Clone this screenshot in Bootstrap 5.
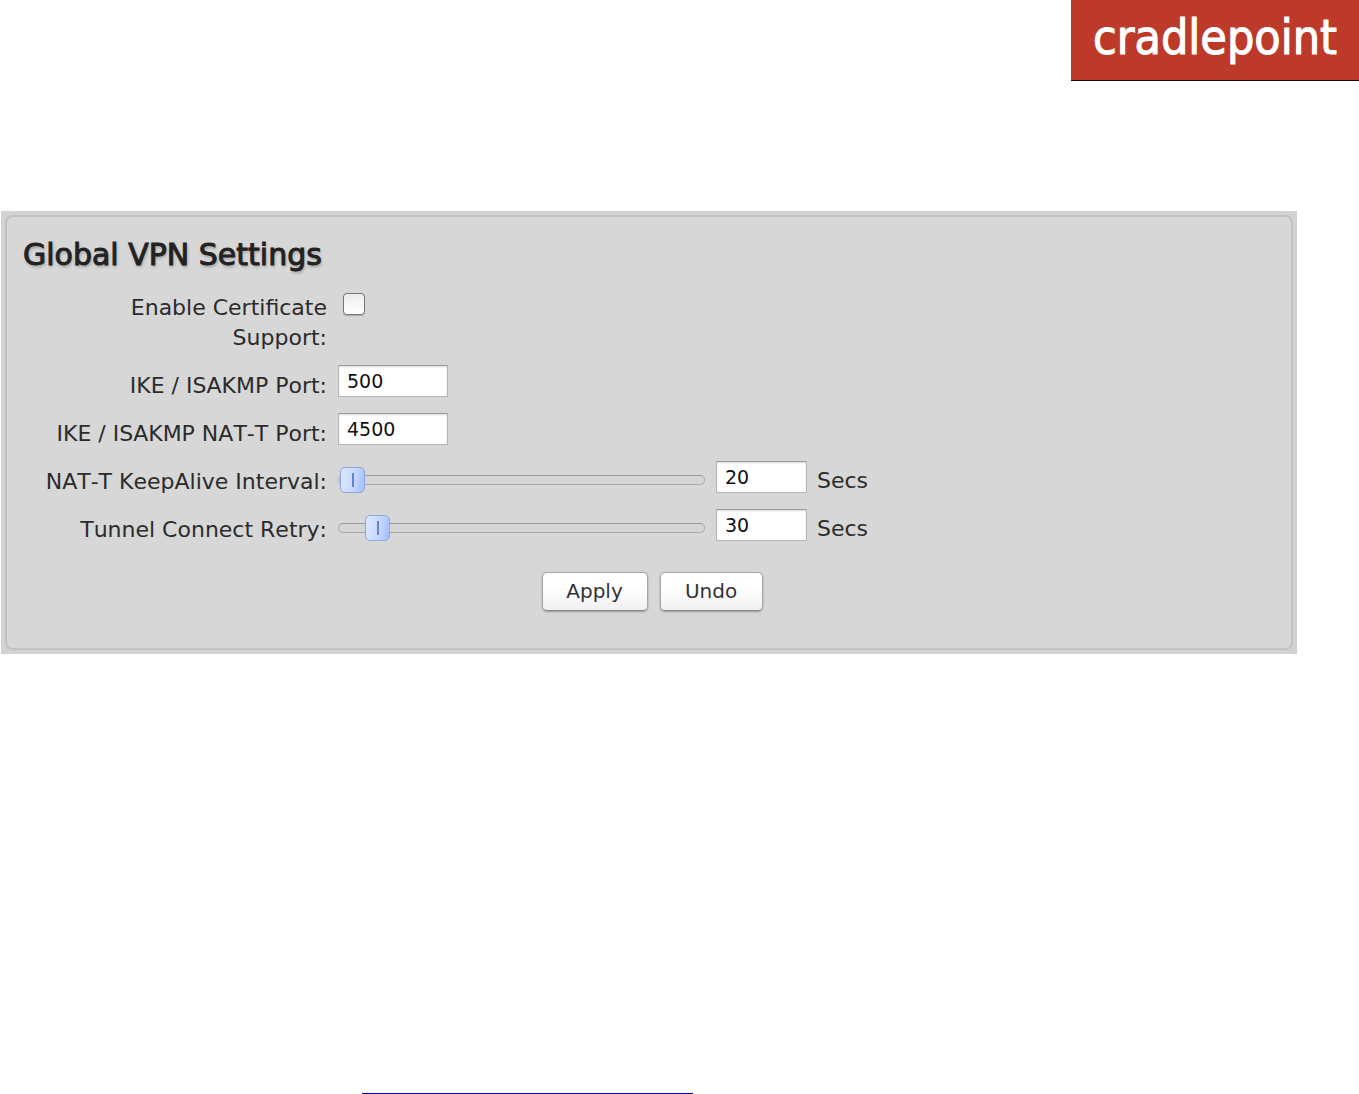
<!DOCTYPE html>
<html lang="en">
<head>
<meta charset="utf-8">
<meta name="viewport" content="width=device-width, initial-scale=1">
<title>Global VPN Settings</title>
<link href="https://cdn.jsdelivr.net/npm/bootstrap@5.3.0/dist/css/bootstrap.min.css" rel="stylesheet">
<style>
body { background: #fff; color: #2b2b2b; font-family: "DejaVu Sans", sans-serif; font-size: 22px; line-height: 30px; }
.brand-box { width: 288px; height: 81px; background: #bd3a2b; border-bottom: 1px solid #1c0502; color: #fff; font-family: "DejaVu Sans Condensed", "DejaVu Sans", sans-serif; font-stretch: condensed; font-size: 48px; line-height: 74px; -webkit-text-stroke: 1px #fff; }
.vpn-main { padding: 130px 62px 0 1px; }
.vpn-outer { background: #d2d2d2; padding: 4px; }
.vpn-panel { background: #d7d7d7; border: 2px solid #c2c2c2; border-radius: 8px; padding: 20px 16px 37px; }
.vpn-title { font-size: 30px; line-height: 36px; margin: 0 0 20px; font-weight: 400; color: #222; -webkit-text-stroke: 1px #222; text-shadow: 1px 2px 3px #999; }
.vpn-row { margin-bottom: 12px; }
.vpn-label { width: 304px; margin-right: 11px; text-align: right; font-kerning: none; }
.vpn-line .vpn-label { padding-top: 6px; }
.vpn-unit { padding-top: 5px; }
.vpn-field { height: 32px; border: 1px solid #b5b5b5; border-top-color: #999; border-radius: 0; background: #fff; padding: 0 8px; font-size: 19px; line-height: 30px; color: #111; box-shadow: inset 0 1px 2px #ddd; }
.vpn-port { width: 110px; }
.vpn-secs { width: 91px; margin: 0 10px 0 11px; }
.vpn-tick { appearance: none; width: 22px; height: 22px; margin-left: 5px; background: linear-gradient(#ececec, #fff); border: 1px solid #777; border-radius: 4px; box-shadow: 0 1px 1px #aaa; }
.vpn-tick:checked { background: #7d9fe8; }
.vpn-slider { appearance: none; width: 367px; height: 28px; margin: 5px 0 0; background: transparent; }
.vpn-slider::-webkit-slider-runnable-track { height: 10px; border: 1px solid #aaa; border-top-color: #999; border-radius: 5px; background: #d5d5d5; }
.vpn-slider::-webkit-slider-thumb { appearance: none; width: 25px; height: 26px; margin-top: -9px; border: 1px solid #8fa5dd; border-radius: 5px; background: linear-gradient(#6684cc, #6684cc) center / 2px 14px no-repeat, linear-gradient(100deg, #dce8ff, #c8d9ff 55%, #a2bbff); }
.vpn-btn, .vpn-btn:hover { height: 39px; padding: 0; border: 1px solid #a5a5a5; border-bottom-color: #888; border-radius: 5px; background: linear-gradient(#fff 40%, #f0f0f0); color: #333; font-size: 20px; line-height: 37px; box-shadow: 0 1px 2px #999; }
.vpn-apply { width: 106px; }
.vpn-undo { width: 103px; }
.vpn-actions { gap: 12px; padding: 15px 0 0 6px; }
.page-rule { width: 331px; height: 1px; margin-left: 362px; background: #00c; }
</style>
<script src="https://cdn.jsdelivr.net/npm/bootstrap@5.3.0/dist/js/bootstrap.bundle.min.js"></script>
</head>
<body class="d-flex flex-column min-vh-100">
<header class="d-flex justify-content-end">
  <div class="brand-box d-flex justify-content-center"><span>cradlepoint</span></div>
</header>
<main class="vpn-main">
  <div class="vpn-outer">
    <form class="vpn-panel">
      <h1 class="vpn-title">Global VPN Settings</h1>
      <div class="vpn-row d-flex align-items-start">
        <label class="vpn-label" for="cert">Enable Certificate<br>Support:</label>
        <input class="vpn-tick" type="checkbox" id="cert">
      </div>
      <div class="vpn-row vpn-line d-flex align-items-start">
        <label class="vpn-label" for="ike">IKE / ISAKMP Port:</label>
        <input class="vpn-field vpn-port" type="text" id="ike" value="500">
      </div>
      <div class="vpn-row vpn-line d-flex align-items-start">
        <label class="vpn-label" for="natt">IKE / ISAKMP NAT-T Port:</label>
        <input class="vpn-field vpn-port" type="text" id="natt" value="4500">
      </div>
      <div class="vpn-row vpn-line d-flex align-items-start">
        <label class="vpn-label" for="keep">NAT-T KeepAlive Interval:</label>
        <input class="vpn-slider" type="range" id="keep" min="19" max="300" value="20">
        <input class="vpn-field vpn-secs" type="text" value="20" aria-label="KeepAlive seconds">
        <span class="vpn-unit">Secs</span>
      </div>
      <div class="vpn-row vpn-line d-flex align-items-start">
        <label class="vpn-label" for="retry">Tunnel Connect Retry:</label>
        <input class="vpn-slider" type="range" id="retry" min="10" max="270" value="30">
        <input class="vpn-field vpn-secs" type="text" value="30" aria-label="Retry seconds">
        <span class="vpn-unit">Secs</span>
      </div>
      <div class="vpn-actions d-flex justify-content-center">
        <button class="btn vpn-btn vpn-apply" type="button">Apply</button>
        <button class="btn vpn-btn vpn-undo" type="button">Undo</button>
      </div>
    </form>
  </div>
</main>
<footer class="mt-auto"><div class="page-rule"></div></footer>
</body>
</html>
